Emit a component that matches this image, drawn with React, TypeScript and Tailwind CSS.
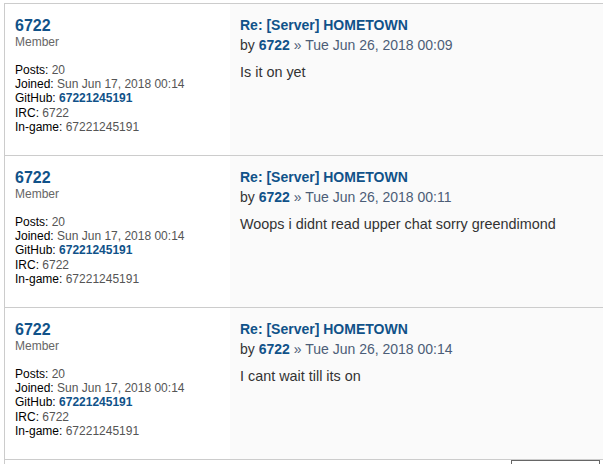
import React from "react";

const posts = [
  { time: "Tue Jun 26, 2018 00:09", text: "Is it on yet" },
  { time: "Tue Jun 26, 2018 00:11", text: "Woops i didnt read upper chat sorry greendimond" },
  { time: "Tue Jun 26, 2018 00:14", text: "I cant wait till its on" },
];

function Post({ time, text }: { time: string; text: string }) {
  return (
    <div className="flex h-[152px] border-t border-[#cccccc]">
      <div className="w-[225px] shrink-0 bg-white pl-[10px] pt-[13px]">
        <div className="text-[16px] font-bold leading-[17px] text-[#105289]">6722</div>
        <div className="pt-[1px] text-[12px] leading-[14px] text-[#666666]">Member</div>
        <div className="mt-[14px] text-[12px] leading-[14.2px] text-[#555555]">
          <div><span className="text-black">Posts:</span> 20</div>
          <div><span className="text-black">Joined:</span> Sun Jun 17, 2018 00:14</div>
          <div><span className="text-black">GitHub:</span> <span className="font-bold text-[#105289]">67221245191</span></div>
          <div><span className="text-black">IRC:</span> 6722</div>
          <div><span className="text-black">In-game:</span> 67221245191</div>
        </div>
      </div>
      <div className="flex-1 bg-[#fafafa] pl-[10px] pt-[12px]">
        <div className="text-[14px] font-bold leading-[18px] text-[#105289]">Re: [Server] HOMETOWN</div>
        <div className="mt-[3px] text-[14px] leading-[16px] text-[#333333]">
          by <span className="font-bold text-[#105289]">6722</span> <span className="text-[#4c5d77]">» {time}</span>
        </div>
        <div className="mt-[10px] text-[14.4px] leading-[18px] text-[#333333]">{text}</div>
      </div>
    </div>
  );
}

export default function App() {
  return (
    <div className="h-[464px] w-[603px] overflow-hidden bg-white" style={{ fontFamily: '"Liberation Sans", Arial, sans-serif' }}>
      <div className="ml-[4px] mt-[3px] border-l border-[#cccccc]">
        {posts.map((p, i) => (
          <Post key={i} time={p.time} text={p.text} />
        ))}
        <div className="border-t border-[#cccccc]">
          <div className="ml-[506px] h-[10px] w-[89px] border border-[#666666] bg-white"></div>
        </div>
      </div>
    </div>
  );
}
